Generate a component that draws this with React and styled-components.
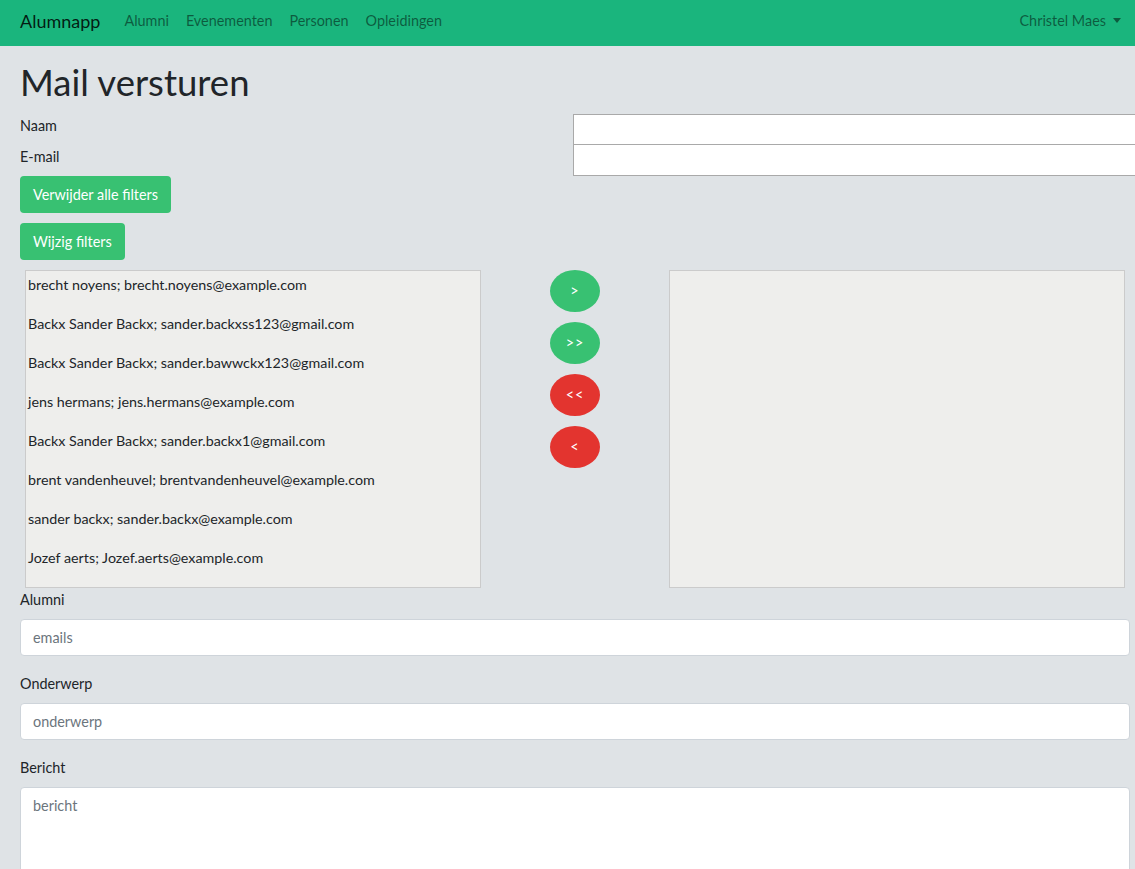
import React from 'react';
import styled, { createGlobalStyle } from 'styled-components';

const GlobalStyle = createGlobalStyle`
    html, body {
        margin: 0;
        padding: 0;
        overflow-x: hidden;
    }
    body {
        background: #dfe3e6;
        font-family: Lato, "Open Sans", "Liberation Sans", sans-serif;
        font-size: 14.4px;
        line-height: 1.6;
        color: #212529;
    }
    * {
        box-sizing: border-box;
    }
`;

const Navbar = styled.nav`
    display: flex;
    align-items: center;
    height: 46px;
    padding: 0 14px 4px 20px;
    background: #1ab57d;

    .brand {
        font-size: 18px;
        color: rgba(0, 0, 0, 0.85);
        margin-right: 24px;
    }

    .links {
        display: flex;
        gap: 17px;
        flex: 1;
    }

    .links span,
    .user {
        color: rgba(0, 0, 0, 0.5);
        font-size: 14.4px;
    }

    .user::after {
        content: '';
        display: inline-block;
        margin-left: 7px;
        vertical-align: 3px;
        border-top: 5px solid rgba(0, 0, 0, 0.5);
        border-left: 4px solid transparent;
        border-right: 4px solid transparent;
    }
`;

const Main = styled.main`
    padding: 0 5px 0 20px;
`;

const Title = styled.h1`
    font-size: 36.5px;
    font-weight: 400;
    line-height: 1.2;
    margin: 15px 0 9px;
`;

const FilterGrid = styled.div`
    display: grid;
    grid-template-columns: 553px 620px;
    align-items: start;

    label {
        line-height: 23px;
        height: 31px;
    }
`;

const FilterInput = styled.div`
    height: 31px;
    background: #fff;
    border: 1px solid #a9a9a9;
    border-top-width: ${(props) => (props.first ? '1px' : '0')};
`;

const Button = styled.button`
    display: block;
    font-family: inherit;
    font-size: 14.4px;
    line-height: 1.6;
    font-weight: 400;
    color: #fff;
    background: ${(props) => (props.danger ? '#e3342f' : '#38c172')};
    border: 1px solid transparent;
    border-radius: 4px;
    padding: 6px 12px;
    margin-bottom: 10px;
`;

const Picker = styled.div`
    display: grid;
    grid-template-columns: 456px 1fr 456px;
    margin: 1px 5px 0 5px;
    width: 1100px;
`;

const ListBox = styled.div`
    height: 318px;
    background: #eeeeec;
    border: 1px solid #cbcbcb;
    padding: 2px 2px;
    overflow: hidden;

    p {
        margin: 0 0 16px;
        line-height: 23px;
        font-size: 14.3px;
    }
`;

const Arrows = styled.div`
    display: flex;
    flex-direction: column;
    align-items: center;
    gap: 10px;
`;

const Round = styled.button`
    width: 50px;
    height: 42px;
    border-radius: 50%;
    border: none;
    padding: 0;
    color: #fff;
    font-family: inherit;
    font-size: 14.4px;
    letter-spacing: 1px;
    background: ${(props) => (props.danger ? '#e3342f' : '#38c172')};
`;

const Group = styled.div`
    margin-bottom: 16px;
    width: 1110px;

    label {
        display: block;
        margin-bottom: 8px;
    }
`;

const Input = styled.input`
    display: block;
    width: 100%;
    height: 37px;
    padding: 6px 12px;
    font-family: inherit;
    font-size: 14.4px;
    line-height: 1.6;
    background: #fff;
    border: 1px solid #ced4da;
    border-radius: 4px;

    &::placeholder {
        color: #6c757d;
    }
`;

const TextArea = styled.textarea`
    display: block;
    width: 100%;
    height: 140px;
    padding: 6px 12px;
    font-family: inherit;
    font-size: 14.4px;
    line-height: 1.6;
    background: #fff;
    border: 1px solid #ced4da;
    border-radius: 4px;
    resize: none;

    &::placeholder {
        color: #6c757d;
    }
`;

const people = [
    'brecht noyens; brecht.noyens@example.com',
    'Backx Sander Backx; sander.backxss123@gmail.com',
    'Backx Sander Backx; sander.bawwckx123@gmail.com',
    'jens hermans; jens.hermans@example.com',
    'Backx Sander Backx; sander.backx1@gmail.com',
    'brent vandenheuvel; brentvandenheuvel@example.com',
    'sander backx; sander.backx@example.com',
    'Jozef aerts; Jozef.aerts@example.com'
];

export default function App() {
    return (
        <>
            <GlobalStyle />
            <Navbar>
                <span className="brand">Alumnapp</span>
                <div className="links">
                    <span>Alumni</span>
                    <span>Evenementen</span>
                    <span>Personen</span>
                    <span>Opleidingen</span>
                </div>
                <span className="user">Christel Maes</span>
            </Navbar>
            <Main>
                <Title>Mail versturen</Title>
                <FilterGrid>
                    <label>Naam</label>
                    <FilterInput first />
                    <label>E-mail</label>
                    <FilterInput />
                </FilterGrid>
                <Button>Verwijder alle filters</Button>
                <Button>Wijzig filters</Button>
                <Picker>
                    <ListBox>
                        {people.map((p) => (
                            <p key={p}>{p}</p>
                        ))}
                    </ListBox>
                    <Arrows>
                        <Round>&gt;</Round>
                        <Round>&gt;&gt;</Round>
                        <Round danger>&lt;&lt;</Round>
                        <Round danger>&lt;</Round>
                    </Arrows>
                    <ListBox />
                </Picker>
                <Group>
                    <label>Alumni</label>
                    <Input placeholder="emails" />
                </Group>
                <Group>
                    <label>Onderwerp</label>
                    <Input placeholder="onderwerp" />
                </Group>
                <Group>
                    <label>Bericht</label>
                    <TextArea placeholder="bericht" />
                </Group>
            </Main>
        </>
    );
}
